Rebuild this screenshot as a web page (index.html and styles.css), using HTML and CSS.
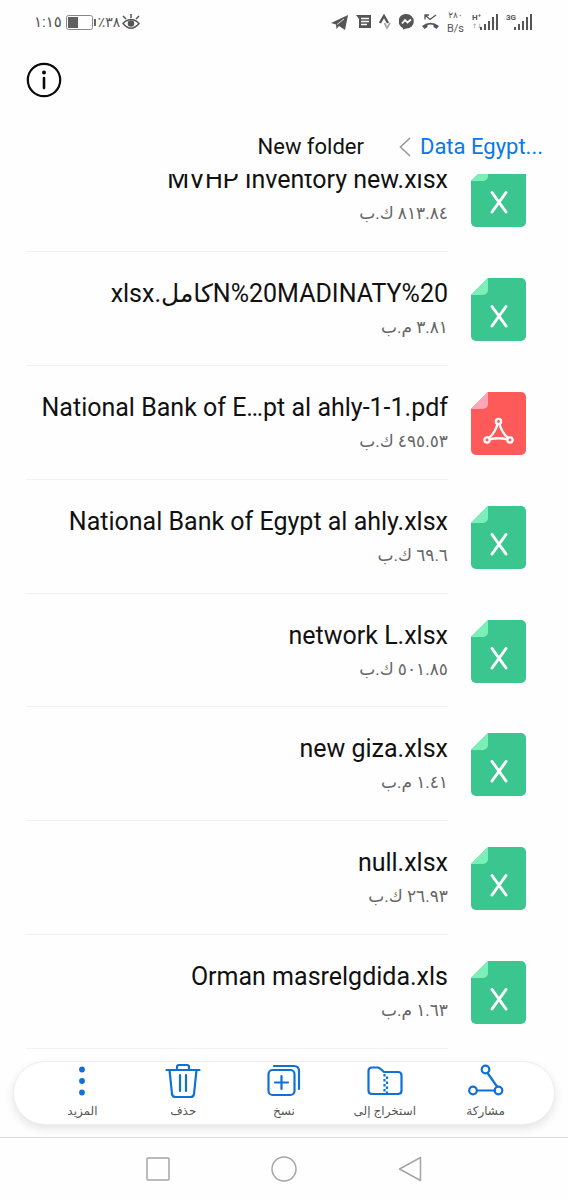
FILE: index.html
```html
<!DOCTYPE html>
<html lang="ar" dir="rtl">
<head>
<meta charset="utf-8">
<meta name="viewport" content="width=device-width, initial-scale=1">
<title>New folder</title>
<link rel="stylesheet" href="styles.css">
</head>
<body>
<svg class="defs" width="0" height="0" aria-hidden="true">
  <symbol id="sheet" viewBox="0 0 55 63">
    <path fill="#3bc58f" d="M17 0H50a5 5 0 0 1 5 5V58a5 5 0 0 1-5 5H5a5 5 0 0 1-5-5V17z"/>
    <path fill="#7af0b8" d="M17 0V12a5 5 0 0 1-5 5H0z"/>
    <path fill="none" stroke="#fff" stroke-width="3" stroke-linecap="round" d="M21 28.500L35 48M35 28.500L21 48"/>
  </symbol>
  <symbol id="pdf" viewBox="0 0 55 63">
    <path fill="#ff5a5a" d="M17 0H50a5 5 0 0 1 5 5V58a5 5 0 0 1-5 5H5a5 5 0 0 1-5-5V17z"/>
    <path fill="#ffa6b6" d="M17 0V12a5 5 0 0 1-5 5H0z"/>
    <g fill="none" stroke="#fff" stroke-width="2.300"><circle cx="27.500" cy="29.500" r="2.600"/><circle cx="16" cy="48" r="2.600"/><circle cx="39" cy="48" r="2.600"/><path d="M26.500 32Q24.500 40 18 46M28.500 32Q30.500 40 37 46M18.500 47.500Q27.500 45 36.500 47.500"/></g>
  </symbol>
  <symbol id="signal" viewBox="0 0 18 16">
    <path fill="#555" d="M0 13h2v3H0zM4 10h2v6H4zM8 7h2v9H8zM12 3h2v13h-2zM16 0h2v16h-2z"/>
  </symbol>
</svg>

<div class="screen">
  <div class="status" dir="ltr">
    <div class="status-left">
      <span class="clock">١:١٥</span>
      <svg width="30" height="15" viewBox="0 0 30 15"><rect x=".5" y=".5" width="26" height="14" rx="2" fill="none" stroke="#888"/><rect x="2" y="2" width="10" height="11" fill="#606060"/><rect x="28" y="4" width="2" height="7" fill="#666"/></svg>
      <span class="charge">٪٣٨</span>
      <svg width="18" height="16" viewBox="0 0 18 16" fill="none" stroke="#555" stroke-width="1.500"><path d="M1 9.500Q9 1.500 17 9.500Q9 19 1 9.500zM9 4V0M4 5L1 2M14 5L17 2"/><circle cx="9" cy="9.500" r="2.500" fill="#555"/></svg>
    </div>
    <div class="status-right">
      <svg width="17" height="15" viewBox="0 0 17 15"><path fill="#555" d="M0 8L17 0L14 15L8 11L5.500 14L5 9.500z"/><path d="M6 9.500L13 4" fill="none" stroke="#fff" stroke-width=".8"/></svg>
      <svg width="15" height="14" viewBox="0 0 15 14"><path fill="#555" d="M0 0H15V13H3V4z"/><path stroke="#fff" stroke-width="1.500" d="M5 3.500H13M5 6.500H13M5 9.500H11"/></svg>
      <svg width="12" height="16" viewBox="0 0 12 16" fill="none"><path stroke="#555" stroke-width="2.400" d="M1 9L5 2L9 9"/><path stroke="#aaa" stroke-width="1.800" d="M5.500 9L8 14L11 9"/></svg>
      <svg width="15" height="16" viewBox="0 0 15 16"><path fill="#555" d="M7.500 0A7.300 7.300 0 0 1 7.500 14.600L4 15.500V14A7.300 7.300 0 0 1 7.500 0z"/><path d="M3 9.500L6 6L8.500 8.500L12 5.500" fill="none" stroke="#fff" stroke-width="1.800"/></svg>
      <svg width="17" height="16" viewBox="0 0 17 16"><path fill="none" stroke="#555" stroke-width="1.300" d="M3 5.500V1H7M3 1L8 5.500L14 1"/><path fill="#555" d="M0 12Q8.500 5.500 17 12L14.500 15L11.500 13V11Q8.500 10 5.500 11V13L2.500 15z"/></svg>
      <span class="speed"><span class="speed-value">٢٨٠</span><span>B/s</span></span>
      <span class="cell"><span class="network">H⁺<small>↑↓</small></span><svg width="18" height="16"><use href="#signal"/></svg></span>
      <span class="cell"><span class="network">3G</span><svg width="18" height="16"><use href="#signal"/></svg></span>
    </div>
  </div>

  <header class="header">
    <button class="info" type="button" aria-label="معلومات"><svg width="36" height="36" viewBox="0 0 36 36"><circle cx="18" cy="18" r="16.200" fill="none" stroke="#0a0a0a" stroke-width="2.200"/><circle cx="18" cy="10.500" r="2" fill="#0a0a0a"/><path stroke="#0a0a0a" stroke-width="2.600" stroke-linecap="round" d="M18 16V26"/></svg></button>
  </header>

  <nav class="path">
    <a href="#parent" dir="ltr">Data Egypt...</a>
    <svg width="12" height="20" viewBox="0 0 12 20" fill="none" stroke="#999" stroke-width="1.600"><path d="M11 1L1.500 10L11 19"/></svg>
    <span>New folder</span>
  </nav>

  <main class="viewport">
    <ul class="files">
      <li class="file"><svg class="file-icon"><use href="#sheet"/></svg><div class="file-text"><span class="name">MVHP Inventory new.xlsx</span><span class="size">٨١٣.٨٤ ك.ب</span></div></li>
      <li class="file"><svg class="file-icon"><use href="#sheet"/></svg><div class="file-text"><span class="name">N%20MADINATY%20كامل.xlsx</span><span class="size">٣.٨١ م.ب</span></div></li>
      <li class="file"><svg class="file-icon"><use href="#pdf"/></svg><div class="file-text"><span class="name">National Bank of E…pt al ahly-1-1.pdf</span><span class="size">٤٩٥.٥٣ ك.ب</span></div></li>
      <li class="file"><svg class="file-icon"><use href="#sheet"/></svg><div class="file-text"><span class="name">National Bank of Egypt al ahly.xlsx</span><span class="size">٦٩.٦ ك.ب</span></div></li>
      <li class="file"><svg class="file-icon"><use href="#sheet"/></svg><div class="file-text"><span class="name">network L.xlsx</span><span class="size">٥٠١.٨٥ ك.ب</span></div></li>
      <li class="file"><svg class="file-icon"><use href="#sheet"/></svg><div class="file-text"><span class="name">new giza.xlsx</span><span class="size">١.٤١ م.ب</span></div></li>
      <li class="file"><svg class="file-icon"><use href="#sheet"/></svg><div class="file-text"><span class="name">null.xlsx</span><span class="size">٢٦.٩٣ ك.ب</span></div></li>
      <li class="file"><svg class="file-icon"><use href="#sheet"/></svg><div class="file-text"><span class="name">Orman masrelgdida.xls</span><span class="size">١.٦٣ م.ب</span></div></li>
    </ul>
  </main>

  <div class="toolbar">
    <button type="button"><svg width="36" height="36" viewBox="0 0 36 36"><path d="M19.500 10L29 23.500M9 27.500H27"/><circle cx="17.500" cy="6.500" r="3.800"/><circle cx="5" cy="27.500" r="3.800"/><circle cx="30.500" cy="27.500" r="3.800"/></svg>مشاركة</button>
    <button type="button"><svg width="36" height="36" viewBox="0 0 36 36"><path d="M5 4.500H10.500Q12 4.500 13 5.500L17 9H31Q34.500 9 34.500 12.500V27.500Q34.500 31 31 31H5Q1.500 31 1.500 27.500V8Q1.500 4.500 5 4.500z"/><path class="zip" d="M17.500 11V30"/><path class="zip" d="M20 13.500V30"/></svg>استخراج إلى</button>
    <button type="button"><svg width="36" height="36" viewBox="0 0 36 36"><rect x="2.500" y="7" width="26" height="25" rx="4"/><path d="M8 3H28Q33 3 33 8V26M15.500 13V26M9 19.500H22"/></svg>نسخ</button>
    <button type="button"><svg width="36" height="36" viewBox="0 0 36 36"><path d="M1.500 7H34.500M12 7V4Q12 2 14 2H22Q24 2 24 4V7M4.500 7L7 31Q7.500 34 10.500 34H25.500Q28.500 34 29 31L31.500 7M15 12V28M21 12V28"/></svg>حذف</button>
    <button type="button"><svg width="36" height="36" viewBox="0 0 36 36"><g fill="#0f70d8" stroke="none"><circle cx="18" cy="6.500" r="2.900"/><circle cx="18" cy="18" r="2.900"/><circle cx="18" cy="29.500" r="2.900"/></g></svg>المزيد</button>
  </div>

  <div class="system" dir="ltr">
    <button type="button" aria-label="التطبيقات الأخيرة"><svg width="26" height="26" viewBox="0 0 26 26"><rect x="2" y="2" width="22" height="22" rx="1"/></svg></button>
    <button type="button" aria-label="الشاشة الرئيسية"><svg width="26" height="26" viewBox="0 0 26 26"><circle cx="13" cy="13" r="12"/></svg></button>
    <button type="button" aria-label="رجوع"><svg width="26" height="26" viewBox="0 0 26 26"><path stroke-linejoin="round" d="M23.500 1.500V24.500L2.500 13z"/></svg></button>
  </div>
</div>
</body>
</html>
```
FILE: styles.css
```css
* { box-sizing: border-box; }

body {
  margin: 0;
  background: #fefefe;
  color: #111;
  font-family: Roboto, "Noto Sans", "DejaVu Sans", sans-serif;
}

button {
  padding: 0;
  border: 0;
  background: none;
  font: inherit;
  color: inherit;
}

.defs { position: absolute; }

.screen {
  display: flex;
  flex-direction: column;
  min-height: 100vh;
}

.status {
  display: flex;
  justify-content: space-between;
  height: 44px;
  padding: 0 36px 0 34px;
  color: #555;
  font-size: 15px;
}

.status-left,
.status-right {
  display: flex;
  align-items: center;
}

.clock { margin-right: 4px; }
.charge { margin: 0 2px; font-size: 14px; }
.status-right { gap: 8px; }

.speed {
  display: flex;
  flex-direction: column;
  align-items: center;
  font-size: 11px;
  line-height: 14px;
}

.speed-value { font-size: 9px; }
.cell { display: flex; align-items: center; }

.network {
  display: flex;
  flex-direction: column;
  align-self: flex-start;
  width: 8px;
  font-size: 8px;
  font-weight: 700;
  line-height: 8px;
}

.network small { color: #aaa; font-size: 6px; }

.header {
  display: flex;
  justify-content: flex-end;
  padding: 18px 26px 0;
}

.info { display: flex; }

.path {
  display: flex;
  align-items: center;
  height: 76px;
  padding: 22px 25px 0;
  font-size: 22px;
  line-height: 28px;
}

.path svg { margin: 0 9px 0 35px; }

.path a {
  color: #0a78e6;
  text-decoration: none;
}

.viewport {
  display: flex;
  flex: 1;
  overflow: hidden;
}

.files {
  display: grid;
  flex: 1;
  grid-auto-rows: 1fr;
  margin: -36px 0 0;
  padding: 0 42px 0 26px;
  list-style: none;
}

.file {
  display: flex;
  gap: 23px;
}

.file-icon {
  flex: none;
  width: 55px;
  height: 63px;
  margin-top: 26px;
}

.file-text {
  display: flex;
  flex: 1;
  flex-direction: column;
  min-width: 0;
  padding-top: 24px;
  border-bottom: 1px solid #f2f2f2;
}

.name {
  font-size: 25px;
  line-height: 36px;
  white-space: nowrap;
}

.size {
  color: #666;
  font-size: 17px;
  line-height: 30px;
}

.toolbar {
  display: flex;
  height: 64px;
  margin: 12px 13px;
  padding: 0 18px;
  border: 1px solid #eee;
  border-radius: 32px;
  background: #fff;
  box-shadow: 0 4px 10px rgb(0 0 0 / 10%);
}

.toolbar button {
  display: flex;
  flex: 1;
  flex-direction: column;
  align-items: center;
  padding-top: 1px;
  color: #555;
  font-size: 12px;
  line-height: 24px;
}

.toolbar svg {
  flex: none;
  fill: none;
  stroke: #0f70d8;
  stroke-width: 2.2;
  stroke-linecap: round;
  stroke-linejoin: round;
}

.toolbar .zip {
  stroke-dasharray: 2.5 2.5;
  stroke-linecap: butt;
}

.system {
  display: flex;
  justify-content: center;
  gap: 100px;
  height: 63px;
  border-top: 1px solid #ddd;
}

.system svg {
  display: block;
  fill: none;
  stroke: #a5a5a5;
  stroke-width: 1.5;
}
```
